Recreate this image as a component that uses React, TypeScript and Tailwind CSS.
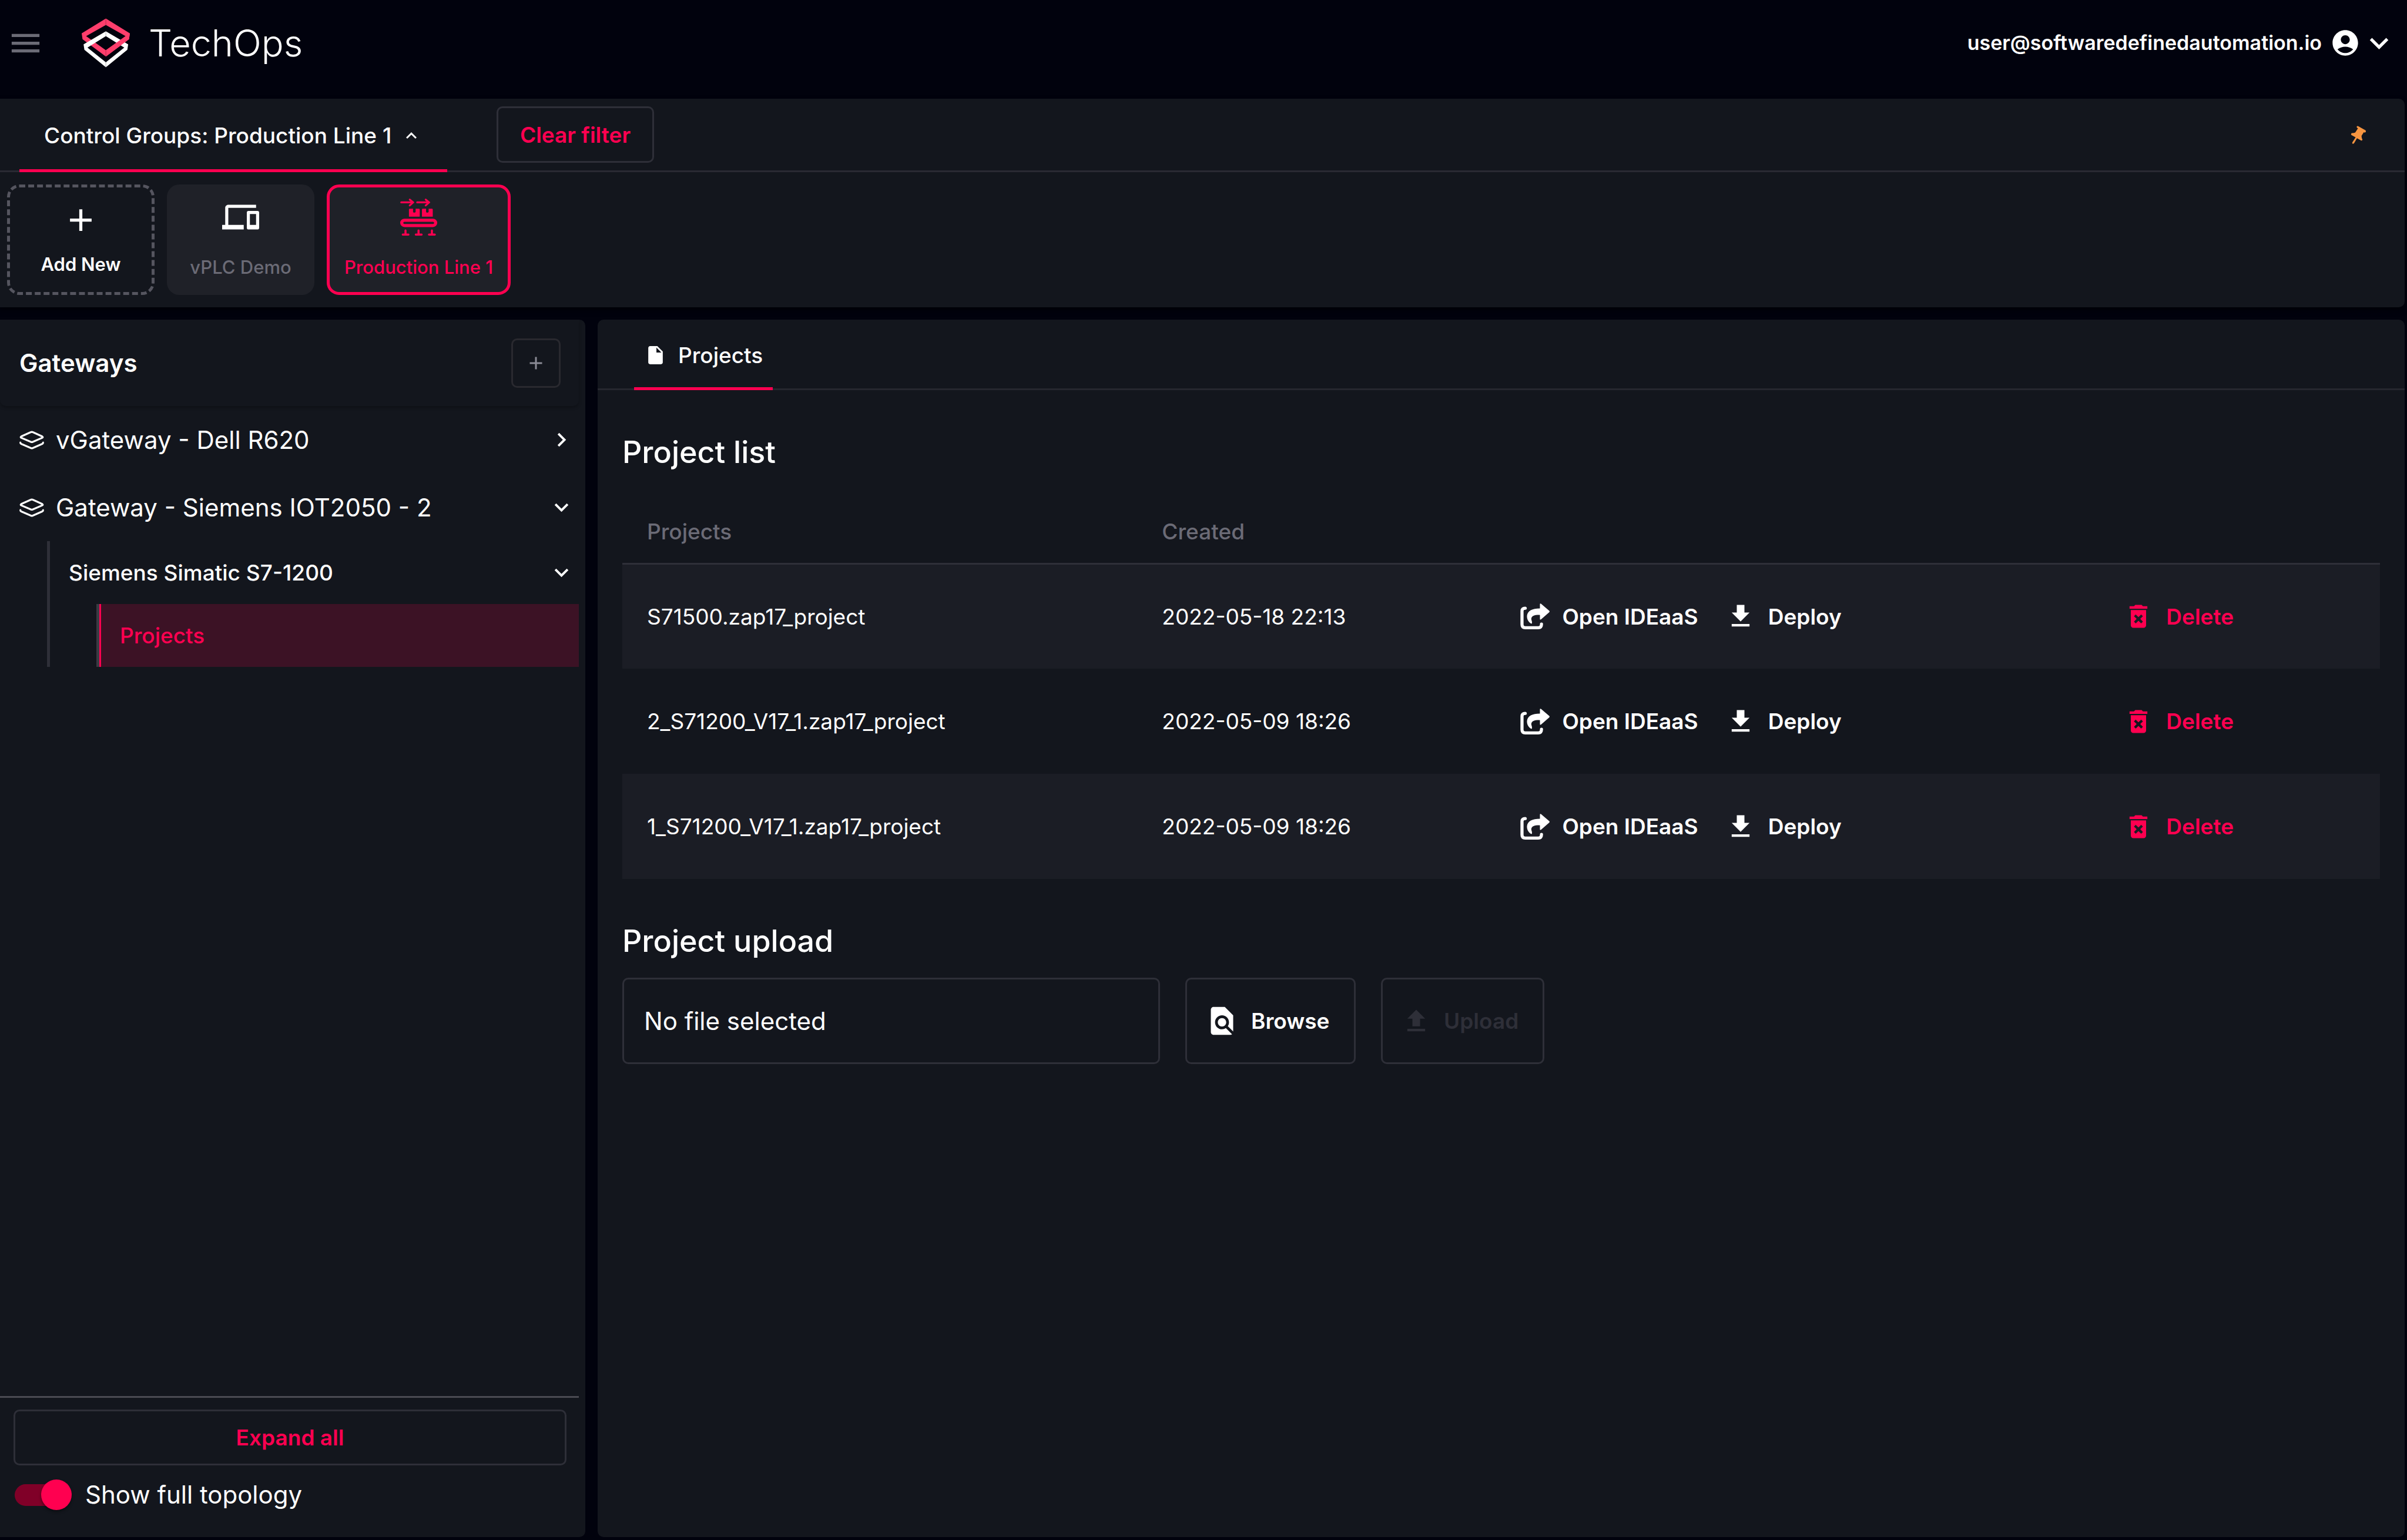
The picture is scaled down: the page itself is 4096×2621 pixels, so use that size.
import { useState } from 'react';
import {
  MdAccountCircle,
  MdAdd,
  MdChevronRight,
  MdDeleteForever,
  MdDevices,
  MdExpandLess,
  MdExpandMore,
  MdFindInPage,
  MdInsertDriveFile,
  MdMenu,
} from 'react-icons/md';

type Project = {
  name: string;
  created: string;
};

const projects: Project[] = [
  { name: 'S71500.zap17_project', created: '2022-05-18 22:13' },
  { name: '2_S71200_V17_1.zap17_project', created: '2022-05-09 18:26' },
  { name: '1_S71200_V17_1.zap17_project', created: '2022-05-09 18:26' },
];

export default function App() {
  return (
    <div className="flex min-h-screen flex-col bg-[#01020d] pb-[5px] font-[Inter,sans-serif] text-[37px] leading-none text-white">
      <Header />
      <ControlGroups />
      <div className="mt-[21px] flex flex-1 gap-[21px] pr-1">
        <Gateways />
        <ProjectPanel />
      </div>
    </div>
  );
}

function Header() {
  return (
    <header className="flex h-[168px] items-start justify-between pl-3 pr-4 pt-[31px]">
      <div className="flex h-[84px] items-center">
        <button type="button" aria-label="Menu" className="mr-16 text-[#6b6b76]">
          <MdMenu className="size-[63px]" />
        </button>
        <Logo />
        <span className="ml-8 text-[63px] font-light">TechOps</span>
      </div>
      <button type="button" className="flex h-[84px] items-center text-[34px] font-semibold">
        <span className="mr-[14px]">user@softwaredefinedautomation.io</span>
        <MdAccountCircle className="size-[52px]" />
        <MdExpandMore className="size-[63px]" />
      </button>
    </header>
  );
}

function ControlGroups() {
  return (
    <section className="mr-1 rounded-r-[10px] bg-[#13161d] shadow-[0_5px_10px_rgba(0,0,0,0.5)]">
      <div className="flex h-[125px] items-center border-b-3 border-[#2a2a33] pl-[33px] pr-[65px]">
        <button type="button" className="-mb-[3px] flex h-[125px] w-[728px] items-center border-b-5 border-[#ff0050] pl-[42px] pt-[5px] font-medium">
          Control Groups: Production Line 1
          <MdExpandLess className="ml-4 size-[36px]" />
        </button>
        <button type="button" className="ml-[84px] h-24 w-[268px] rounded-[10px] border-3 border-[#2e2f38] font-semibold text-[#ff0050]">
          Clear filter
        </button>
        <button type="button" aria-label="Pin" className="ml-auto text-[#f89540]">
          <PinIcon />
        </button>
      </div>
      <div className="flex gap-[21px] px-3 py-[21px] text-[31px]">
        <button type="button" className="flex h-[188px] w-[251px] flex-col items-center gap-7 rounded-[21px] border-5 border-dashed border-[#55555f] pt-6 font-semibold">
          <MdAdd className="size-[63px]" />
          Add New
        </button>
        <button type="button" className="flex h-[188px] w-[251px] flex-col items-center gap-[38px] rounded-[21px] bg-[#1f2128] pt-6 font-medium text-[#6b6b76]">
          <MdDevices className="size-[63px] text-white" />
          vPLC Demo
        </button>
        <button type="button" className="flex h-[188px] w-[313px] flex-col items-center gap-[38px] rounded-[21px] border-5 border-[#ff0050] bg-[#1f2128] pt-[19px] font-medium text-[#ff0050]">
          <ConveyorIcon />
          <span className="whitespace-nowrap">Production Line 1</span>
        </button>
      </div>
    </section>
  );
}

function Gateways() {
  const [fullTopology, setFullTopology] = useState(true);

  return (
    <aside className="flex w-[996px] shrink-0 flex-col rounded-r-[10px] bg-[#13161d] pr-[11px]">
      <div className="flex h-[147px] items-center justify-between rounded-b-[10px] pl-[33px] pr-[31px] shadow-[0_3px_5px_rgba(0,0,0,0.25)]">
        <h2 className="text-[42px] font-semibold">Gateways</h2>
        <button type="button" aria-label="Add gateway" className="flex size-[84px] items-center justify-center rounded-[10px] border-3 border-[#29292f] text-[#8b8b96]">
          <MdAdd className="size-[36px]" />
        </button>
      </div>

      <nav className="flex flex-col">
        <GatewayRow name="vGateway - Dell R620" />
        <GatewayRow name="Gateway - Siemens IOT2050 - 2" open />
        <div className="ml-20 border-l-5 border-[#2e2f38]">
          <button type="button" className="flex h-[107px] w-full items-center justify-between pl-8 pr-[6px] font-medium">
            Siemens Simatic S7-1200
            <MdExpandMore className="size-[47px]" />
          </button>
          <div className="ml-[79px] border-l-5 border-[#3a3a43]">
            <a href="#projects" className="flex h-[107px] items-center border-l-3 border-[#ff0050] bg-[#3c1225] pl-8 font-medium text-[#ff0050]">
              Projects
            </a>
          </div>
        </div>
      </nav>

      <div className="mt-auto border-t-3 border-[#4a4a52] pb-[46px] pl-[23px] pr-[21px] pt-[20px]">
        <button type="button" className="h-[95px] w-full rounded-[10px] border-3 border-[#2e2f38] font-semibold text-[#ff0050]">
          Expand all
        </button>
        <label className="mt-6 flex h-[52px] items-center gap-[23px] pl-[2px] text-[42px]">
          <input
            type="checkbox"
            role="switch"
            checked={fullTopology}
            onChange={(event) => setFullTopology(event.target.checked)}
            className="mr-2 flex h-[37px] w-[89px] appearance-none items-center rounded-full bg-[#3a3a43] before:size-[52px] before:shrink-0 before:rounded-full before:bg-[#8b8b96] before:shadow-[0_3px_5px_rgba(0,0,0,0.4)] checked:bg-[#800028] checked:before:ml-[45px] checked:before:bg-[#ff0050]"
          />
          Show full topology
        </label>
      </div>
    </aside>
  );
}

function GatewayRow({ name, open = false }: { name: string; open?: boolean }) {
  return (
    <button type="button" className="flex h-[115px] items-center pl-[33px] pr-[6px] text-[42px]">
      <LayersIcon />
      <span className="ml-5 mr-auto">{name}</span>
      {open ? <MdExpandMore className="size-[47px]" /> : <MdChevronRight className="size-[47px]" />}
    </button>
  );
}

function ProjectPanel() {
  return (
    <main className="min-w-0 flex-1 rounded-[10px] bg-[#13161d]">
      <div className="flex h-[120px] border-b-3 border-[#26272f] pl-[62px]">
        <button type="button" className="flex h-[120px] w-[236px] items-center border-b-5 border-[#ff0050] pl-[18px] pt-[5px] font-medium">
          <MdInsertDriveFile className="mr-5 size-[37px]" />
          Projects
        </button>
      </div>

      <div className="px-[42px] pt-20">
        <h2 className="text-[52px] font-medium">Project list</h2>
        <table className="mt-[55px] w-full table-fixed border-collapse text-left">
          <colgroup>
            <col className="w-[29.3%]" />
            <col className="w-[21.8%]" />
            <col className="w-[34.3%]" />
            <col />
          </colgroup>
          <thead>
            <tr className="h-[108px] border-b-3 border-[#2e2f38] text-[#6b6b76]">
              <th className="px-[42px] font-medium">Projects</th>
              <th className="px-[42px] font-medium">Created</th>
              <th aria-label="Actions" />
              <th aria-label="Delete" />
            </tr>
          </thead>
          <tbody>
            {projects.map((project) => (
              <tr key={project.name} className="h-[179px] odd:bg-[#1b1d25]">
                <td className="px-[42px]">{project.name}</td>
                <td className="px-[42px]">{project.created}</td>
                <td>
                  <div className="flex items-center gap-[46px] font-semibold">
                    <button type="button" className="flex items-center gap-[21px]">
                      <OpenIcon />
                      Open IDEaaS
                    </button>
                    <button type="button" className="flex items-center gap-[21px]">
                      <TransferIcon />
                      Deploy
                    </button>
                  </div>
                </td>
                <td>
                  <button type="button" className="flex items-center gap-[21px] font-semibold text-[#ff0050]">
                    <MdDeleteForever className="size-[52px]" />
                    Delete
                  </button>
                </td>
              </tr>
            ))}
          </tbody>
        </table>

        <h2 className="mt-20 text-[52px] font-medium">Project upload</h2>
        <div className="mt-9 flex gap-[43px]">
          <input
            type="text"
            readOnly
            aria-label="Selected file"
            value="No file selected"
            className="h-[147px] w-[915px] rounded-[10px] border-3 border-[#2e2f38] px-[34px] text-[42px] outline-none"
          />
          <button type="button" className="flex h-[147px] w-[290px] items-center gap-[21px] rounded-[10px] border-3 border-[#2e2f38] pl-[31px] font-semibold">
            <MdFindInPage className="size-[57px]" />
            Browse
          </button>
          <button type="button" disabled className="flex h-[147px] w-[278px] items-center gap-[21px] rounded-[10px] border-3 border-[#2e2f38] pl-[31px] font-semibold text-[#2e2f38]">
            <TransferIcon up />
            Upload
          </button>
        </div>
      </div>
    </main>
  );
}

function Logo() {
  return (
    <svg viewBox="0 0 283 287" className="h-[84px] w-[82px]" aria-hidden="true">
      <path fill="#ff3e6c" fillRule="evenodd" d="M142 0 283 87 278 122 142 224 5 122 0 87ZM142 38 26 104 142 187 258 104Z" />
      <path fill="#fff" fillRule="evenodd" d="M142 75 273 152 268 184 142 287 16 184 11 152ZM142 104 34 171 142 257 250 171Z" />
      <path fill="#ff3e6c" d="M258 104 283 87 278 122 142 224V187Z" />
      <path stroke="#01020d" strokeOpacity="0.5" strokeWidth="2" d="M142 0V38M142 75V104M142 187V224M142 257V287" />
    </svg>
  );
}

function PinIcon() {
  return (
    <svg viewBox="70 56 92 107" className="h-[31px] w-[27px]" fill="currentColor" aria-hidden="true">
      <path d="M105 62Q108 56 114 59L157 83Q162 89 156 95Q151 97 147 94L134 115Q133 126 139 137Q139 144 132 143L107 129L90 159Q85 164 80 160Q78 156 81 152L99 124L74 110Q70 104 76 99Q88 100 97 96L113 71Q105 69 105 62Z" />
    </svg>
  );
}

function ConveyorIcon() {
  return (
    <svg viewBox="0 0 216 216" className="size-[63px]" fill="none" stroke="currentColor" strokeLinecap="round" strokeLinejoin="round" aria-hidden="true">
      <path strokeWidth="11" d="M6 22H76M56 6 76 22 56 40M99 22H169M149 6 169 22 149 40" />
      <path fill="currentColor" stroke="none" d="M56 59H75V78Q75 82 82 82T90 78V59H109Q114 59 114 64V105H51V64Q51 59 56 59ZM132 59H151V78Q151 82 158 82T166 78V59H185Q190 59 190 64V105H127V64Q127 59 132 59Z" />
      <rect x="9" y="126" width="198" height="31" rx="15.5" strokeWidth="18" />
      <path strokeWidth="12" d="M15 210H48M31 186V208M91 210H125M107 186V208M168 210H202M185 186V208" />
    </svg>
  );
}

function LayersIcon() {
  return (
    <svg viewBox="0 0 145 109" className="h-[32px] w-[42px]" fill="none" stroke="currentColor" strokeWidth="11" strokeLinecap="round" strokeLinejoin="round" aria-hidden="true">
      <path d="M67 8Q73 5 79 8L134 33Q141 37 134 41L79 65Q73 68 67 65L11 41Q4 37 11 33Z" />
      <path d="M6 69Q5 74 11 77L67 101Q73 104 79 101L134 77Q140 74 139 69" />
    </svg>
  );
}

function OpenIcon() {
  return (
    <svg viewBox="0 0 170 150" className="h-[44px] w-[50px]" aria-hidden="true">
      <path fill="none" stroke="currentColor" strokeWidth="18" strokeLinecap="round" d="M29 28Q10 29 10 44V122Q10 141 29 141H104Q123 141 123 120" />
      <path fill="currentColor" d="M114 5Q114-2 120 2L168 43Q172 47 168 51L120 93Q114 96 114 90V67C84 66 66 72 64 88C63 98 71 107 67 116Q65 119 61 116C47 106 38 92 39 72C42 42 70 30 114 29Z" />
    </svg>
  );
}

// Arrow over a baseline, shared by deploy and upload
function TransferIcon({ up = false }: { up?: boolean }) {
  return (
    <svg viewBox="0 0 24 24" className="size-[52px]" fill="currentColor" aria-hidden="true">
      <path d={up ? 'M9 16h6v-6h4l-7-7-7 7h4zm-4 2h14v2H5z' : 'M19 9h-4V3H9v6H5l7 7 7-7zM5 18v2h14v-2H5z'} />
    </svg>
  );
}
